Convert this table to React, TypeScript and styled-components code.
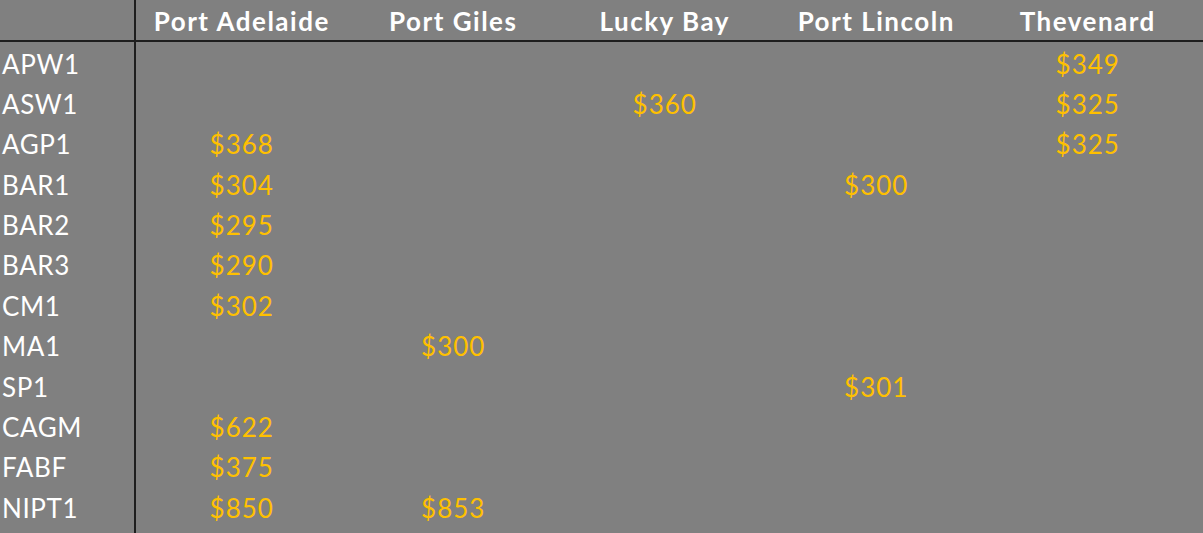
import { createGlobalStyle } from "styled-components";
import styled from "styled-components";
import { Fragment } from "react";

type Row = { code: string; prices: (string | null)[] };

const ports = ["Port Adelaide", "Port Giles", "Lucky Bay", "Port Lincoln", "Thevenard"];

const rows: Row[] = [
  { code: "APW1", prices: [null, null, null, null, "$349"] },
  { code: "ASW1", prices: [null, null, "$360", null, "$325"] },
  { code: "AGP1", prices: ["$368", null, null, null, "$325"] },
  { code: "BAR1", prices: ["$304", null, null, "$300", null] },
  { code: "BAR2", prices: ["$295", null, null, null, null] },
  { code: "BAR3", prices: ["$290", null, null, null, null] },
  { code: "CM1", prices: ["$302", null, null, null, null] },
  { code: "MA1", prices: [null, "$300", null, null, null] },
  { code: "SP1", prices: [null, null, null, "$301", null] },
  { code: "CAGM", prices: ["$622", null, null, null, null] },
  { code: "FABF", prices: ["$375", null, null, null, null] },
  { code: "NIPT1", prices: ["$850", "$853", null, null, null] },
];

const GlobalStyle = createGlobalStyle`
  html, body {
    margin: 0;
    padding: 0;
    background: #808080;
  }
  body {
    font-family: "Lato", "Open Sans", sans-serif;
    overflow: hidden;
  }
`;

const Sheet = styled.div`
  width: 1203px;
  height: 533px;
  background: #808080;
  display: grid;
  grid-template-columns: 136px repeat(5, 211.5px) 1fr;
  grid-template-rows: 42px repeat(12, 40.36px) 1fr;
`;

const Corner = styled.div`
  border-right: 2px solid #1e1e1e;
  border-bottom: 2px solid #1e1e1e;
`;

const HeadCell = styled.div`
  display: flex;
  align-items: center;
  justify-content: center;
  border-bottom: 2px solid #1e1e1e;
  color: #ffffff;
  font-weight: 700;
  font-size: 26px;
  letter-spacing: 1.5px;
  padding-top: 2px;
  white-space: nowrap;
`;

const HeadFill = styled.div`
  border-bottom: 2px solid #1e1e1e;
`;

const Label = styled.div`
  display: flex;
  align-items: center;
  padding-left: 2px;
  padding-top: 3px;
  border-right: 2px solid #1e1e1e;
  color: #ffffff;
  font-size: 26px;
  letter-spacing: 0.6px;
`;

const Price = styled.div`
  display: flex;
  align-items: center;
  justify-content: center;
  padding-top: 3px;
  color: #ffc000;
  font-size: 26px;
  letter-spacing: 1px;
`;

const Filler = styled.div``;

export default function App() {
  return (
    <>
      <GlobalStyle />
      <Sheet>
        <Corner />
        {ports.map((p) => (
          <HeadCell key={p}>{p}</HeadCell>
        ))}
        <HeadFill />
        {rows.map((r) => (
          <Fragment key={r.code}>
            <Label>{r.code}</Label>
            {r.prices.map((v, i) => (
              <Price key={i}>{v}</Price>
            ))}
            <Filler />
          </Fragment>
        ))}
        <Label />
      </Sheet>
    </>
  );
}
